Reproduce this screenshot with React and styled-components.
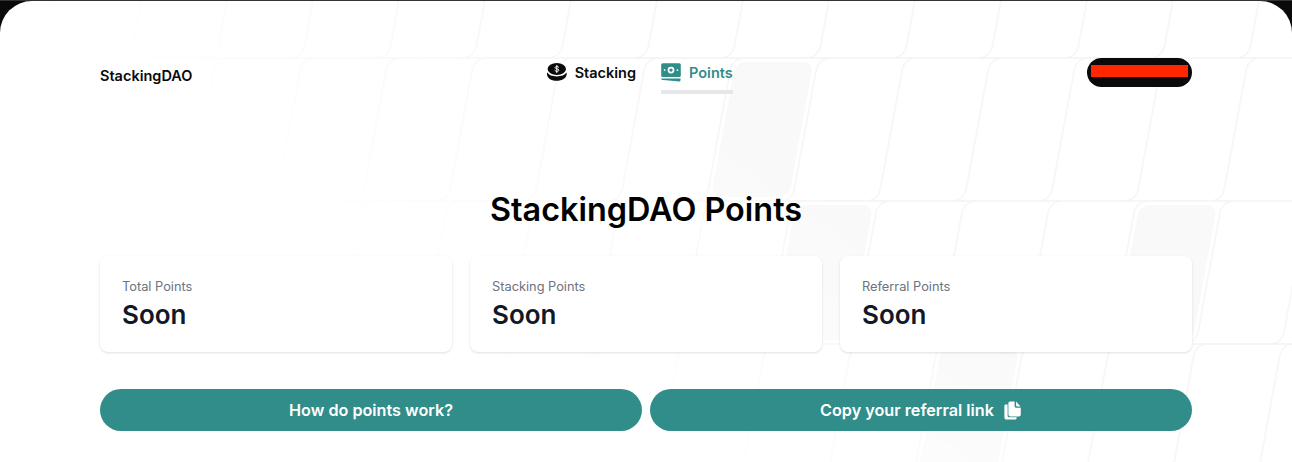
import React from 'react';
import styled, { createGlobalStyle } from 'styled-components';

const GlobalStyle = createGlobalStyle`
  html, body {
    margin: 0;
    padding: 0;
    background: #333;
  }
  body {
    font-family: Inter, "Liberation Sans", sans-serif;
    -webkit-font-smoothing: antialiased;
  }
`;

const TEAL = '#308d8a';

const Frame = styled.div`
  width: 1292px;
  height: 462px;
  padding-top: 1px;
  box-sizing: border-box;
  background: linear-gradient(#333 1px, #0a0a0a 1px);
  overflow: hidden;
`;

const Page = styled.div`
  position: relative;
  height: 461px;
  background: #fff;
  border-radius: 32px 32px 0 0;
  overflow: hidden;
`;

const Pattern = styled.svg`
  position: absolute;
  left: 0;
  top: -1px;
  width: 1292px;
  height: 462px;
  mask-image: linear-gradient(35deg, transparent 33%, #000 62%);
`;

const Container = styled.div`
  position: relative;
  width: 1092px;
  margin: 0 auto;
`;

const Header = styled.header`
  display: flex;
  justify-content: space-between;
  align-items: flex-start;
  padding-top: 57px;
  height: 117px;
  box-sizing: content-box;
`;

const Logo = styled.div`
  font-size: 14.5px;
  line-height: 20px;
  font-weight: 600;
  color: #0a0a0a;
  margin-top: 8px;
`;

const Nav = styled.nav`
  display: flex;
  gap: 25px;
`;

const NavItem = styled.a`
  display: flex;
  align-items: center;
  gap: 8px;
  height: 28px;
  padding-bottom: 4px;
  font-size: 14.5px;
  font-weight: 600;
  color: ${p => (p.$active ? TEAL : '#0a0a0a')};
  border-bottom: 4px solid ${p => (p.$active ? '#e5e7eb' : 'transparent')};
  box-sizing: content-box;
`;

const Wallet = styled.div`
  width: 105px;
  height: 29px;
  box-sizing: border-box;
  padding: 7px 4px 10px;
  background: #0a0a0a;
  border-radius: 15px;
`;

const Redacted = styled.div`
  height: 12px;
  background: #ff2600;
`;

const Title = styled.h1`
  margin: 0;
  padding-top: 15px;
  font-size: 32.4px;
  line-height: 40px;
  font-weight: 600;
  text-align: center;
  color: #000;
`;

const Cards = styled.div`
  display: grid;
  grid-template-columns: repeat(3, 1fr);
  gap: 18px;
  margin-top: 26px;
`;

const Card = styled.div`
  height: 96px;
  box-sizing: border-box;
  padding: 22px 22px;
  background: #fff;
  border-radius: 8px;
  box-shadow: 0 1px 3px rgba(0, 0, 0, 0.1), 0 1px 2px -1px rgba(0, 0, 0, 0.1);
`;

const CardLabel = styled.div`
  font-size: 12.8px;
  line-height: 18px;
  color: #6b7280;
`;

const CardValue = styled.div`
  margin-top: 1px;
  font-size: 26px;
  line-height: 36px;
  font-weight: 600;
  color: #111827;
`;

const Actions = styled.div`
  display: flex;
  gap: 8px;
  margin-top: 37px;
`;

const ActionButton = styled.button`
  flex: 1;
  height: 42px;
  display: flex;
  align-items: center;
  justify-content: center;
  gap: 10px;
  border: 0;
  border-radius: 21px;
  background: ${TEAL};
  color: #fff;
  font-family: inherit;
  font-size: 16.2px;
  font-weight: 600;
`;

const TILE_W = 86;
const TILE_H = 143;
const CORNER = 13;
const SKEW = 'skewX(-10.4)';

// grey tiles: [column, row] counted in the skewed grid
const filled = [[8, 0], [9, 1], [13, 1], [11, 2]];

// one lattice cell: horizontals run through, only two corners of each crossing are rounded
const cellPath = [
  `M0 0H${TILE_W}`,
  `M0 ${TILE_H}H${TILE_W}`,
  `M${CORNER} 0Q0 0 0 ${CORNER}V${TILE_H - CORNER}`,
  `M${TILE_W} ${CORNER}V${TILE_H - CORNER}Q${TILE_W} ${TILE_H} ${TILE_W - CORNER} ${TILE_H}`,
  `M0 ${TILE_H - CORNER}Q0 ${TILE_H} ${-CORNER} ${TILE_H}`,
  `M${TILE_W + CORNER} 0Q${TILE_W} 0 ${TILE_W} ${CORNER}`,
].join('');

function TilePattern() {
  return (
    <Pattern viewBox="0 0 1292 462">
      <defs>
        <pattern
          id="tiles"
          x="55"
          y="58"
          width={TILE_W}
          height={TILE_H}
          patternUnits="userSpaceOnUse"
          patternTransform={SKEW}
        >
          <path d={cellPath} fill="none" stroke="#f4f4f5" strokeWidth="1.4" />
        </pattern>
      </defs>
      <rect x="0" y="0" width="1292" height="462" fill="url(#tiles)" />
      <g transform={SKEW}>
        {filled.map(([col, row]) => (
          <rect
            key={`${col}-${row}`}
            x={55 + col * TILE_W + 4}
            y={58 + row * TILE_H + 4}
            width={TILE_W - 8}
            height={TILE_H - 8}
            rx="10"
            fill="#f9f9f9"
          />
        ))}
      </g>
    </Pattern>
  );
}

function CoinIcon() {
  return (
    <svg width="20" height="18" viewBox="0 0 20 18">
      <path fill="#0a0a0a" d="M0.4 9.6C1.8 12.2 5.2 13.4 9.8 13.4c4.6 0 8-1.2 9.6-3.8.5 1.1.4 2.2-.1 3.2-.8 2.8-4.4 5-9.5 5-5 0-8.6-2-9.5-5-.4-1-.4-2.1-.1-3.2z" />
      <ellipse cx="9.8" cy="6" rx="9.2" ry="6" fill="#0a0a0a" />
      <path fill="none" stroke="#fff" strokeWidth="1" strokeLinecap="round" d="M11.6 4.2c-.4-.5-1-.7-1.8-.7-1 0-1.7.5-1.7 1.2 0 1.6 3.7.7 3.7 2.4 0 .8-.8 1.2-1.9 1.2-.8 0-1.6-.3-2-.8M9.8 2.4v7.2" />
    </svg>
  );
}

function BanknoteIcon() {
  return (
    <svg width="20" height="19" viewBox="0 0 20 19">
      <rect x="0.2" y="0.2" width="19.6" height="13.8" rx="1.6" fill={TEAL} />
      <circle cx="10" cy="7.1" r="3.4" fill="#fff" />
      <circle cx="10" cy="7.1" r="1.7" fill={TEAL} />
      <circle cx="3.6" cy="7.1" r="0.9" fill="#fff" />
      <circle cx="16.4" cy="7.1" r="0.9" fill="#fff" />
      <path fill={TEAL} d="M0.2 15.4h19.4c0 1-.1 2.9-.9 3.2l-16.5-1.5C1 17 .2 16.4.2 15.4z" />
    </svg>
  );
}

function CopyIcon() {
  return (
    <svg width="18" height="19" viewBox="0 0 18 19">
      <path fill="#fff" d="M1.6 3.6h2v11.2c0 .8.6 1.4 1.4 1.4h7.6v.8c0 .9-.7 1.6-1.6 1.6H2.6C1.4 18.6.4 17.6.4 16.4V4.8c0-.6.5-1.2 1.2-1.2z" />
      <path fill="#fff" d="M6.2 0.4h4.4v4.6c0 1 .8 1.8 1.8 1.8h4.4v6.8c0 1-.8 1.8-1.8 1.8H6.2c-1 0-1.8-.8-1.8-1.8V2.2c0-1 .8-1.8 1.8-1.8z" />
      <path fill="#fff" d="M12 0.6l4.6 4.8h-3.4c-.7 0-1.2-.5-1.2-1.2V.6z" />
    </svg>
  );
}

export default function App() {
  return (
    <Frame>
      <GlobalStyle />
      <Page>
        <TilePattern />
        <Container>
          <Header>
            <Logo>StackingDAO</Logo>
            <Nav>
              <NavItem>
                <CoinIcon />
                Stacking
              </NavItem>
              <NavItem $active>
                <BanknoteIcon />
                Points
              </NavItem>
            </Nav>
            <Wallet>
              <Redacted />
            </Wallet>
          </Header>
          <Title>StackingDAO Points</Title>
          <Cards>
            <Card>
              <CardLabel>Total Points</CardLabel>
              <CardValue>Soon</CardValue>
            </Card>
            <Card>
              <CardLabel>Stacking Points</CardLabel>
              <CardValue>Soon</CardValue>
            </Card>
            <Card>
              <CardLabel>Referral Points</CardLabel>
              <CardValue>Soon</CardValue>
            </Card>
          </Cards>
          <Actions>
            <ActionButton>How do points work?</ActionButton>
            <ActionButton>
              Copy your referral link
              <CopyIcon />
            </ActionButton>
          </Actions>
        </Container>
      </Page>
    </Frame>
  );
}
